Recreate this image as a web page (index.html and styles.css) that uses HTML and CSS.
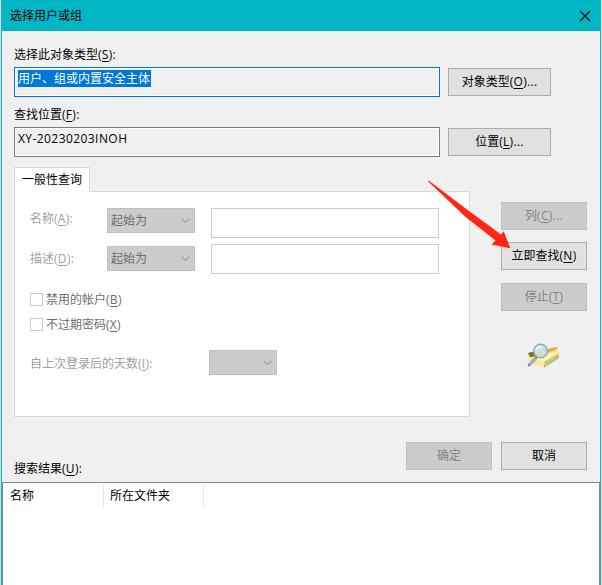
FILE: index.html
```html
<!DOCTYPE html>
<html lang="zh-CN">
<head>
<meta charset="utf-8">
<title>选择用户或组</title>
<link rel="stylesheet" href="styles.css">
</head>
<body>
<div class="dialog">
  <header class="titlebar">
    <span>选择用户或组</span>
    <svg class="close" width="12" height="12" viewBox="0 0 12 12"><path d="M1 1 11 11M11 1 1 11"/></svg>
  </header>
  <main class="content">
    <div class="label">选择此对象类型<span class="key">(<u>S</u>):</span></div>
    <div class="pick-row">
      <div class="field field-focus"><span class="selected">用户、组或内置安全主体</span></div>
      <button class="btn btn-wide">对象类型<span class="key">(<u>O</u>)...</span></button>
    </div>
    <div class="label">查找位置<span class="key">(<u>F</u>):</span></div>
    <div class="pick-row">
      <div class="field"><span class="location">XY-20230203INOH</span></div>
      <button class="btn btn-wide">位置<span class="key">(<u>L</u>)...</span></button>
    </div>
    <div class="query">
      <div class="tabs">
        <div class="tab">一般性查询</div>
        <section class="panel">
          <div class="criteria">
            <span class="dim">名称<span class="key">(<u>A</u>):</span></span>
            <div class="select">起始为<svg width="9" height="6" viewBox="0 0 9 6"><path d="M.5.5 4.5 4.5 8.5.5"/></svg></div>
            <div class="textbox"></div>
          </div>
          <div class="criteria">
            <span class="dim">描述<span class="key">(<u>D</u>):</span></span>
            <div class="select">起始为<svg width="9" height="6" viewBox="0 0 9 6"><path d="M.5.5 4.5 4.5 8.5.5"/></svg></div>
            <div class="textbox"></div>
          </div>
          <div class="checks">
            <div class="check"><i class="box"></i>禁用的帐户<span class="key">(<u>B</u>)</span></div>
            <div class="check"><i class="box"></i>不过期密码<span class="key">(<u>X</u>)</span></div>
          </div>
          <div class="days">
            <span class="dim">自上次登录后的天数<span class="key">(<u>I</u>):</span></span>
            <div class="select"><svg width="9" height="6" viewBox="0 0 9 6"><path d="M.5.5 4.5 4.5 8.5.5"/></svg></div>
          </div>
        </section>
      </div>
      <aside class="actions">
        <button class="btn" disabled>列<span class="key">(<u>C</u>)...</span></button>
        <button class="btn">立即查找<span class="key">(<u>N</u>)</span></button>
        <button class="btn btn-stop" disabled>停止<span class="key">(<u>T</u>)</span></button>
        <svg class="search-icon" width="34" height="28" viewBox="0 0 34 28">
          <path d="M1 10 20 5 32 10 32 14 17 24 7 22 1 14Z" fill="#efe58f"/>
          <path d="M1 10 8 8 13 13 3 14Z" fill="#7a7240"/>
          <path d="M16 7 30 4 30 6 18 13Z" fill="#dcae40"/>
          <path d="M20 10 29 6 32 7 24 13Z" fill="#f3dc80"/>
          <path d="M7 17 26 9 32 10 17 18.500Z" fill="#fbf5bd"/>
          <path d="M17 18.500 32 10 32 14 17 24Z" fill="#ddd07a"/>
          <path d="M7 17 17 18.500 17 24 7 22Z" fill="#f4eca4"/>
          <path d="M17 24 32 14.500M20 18.500v2M23.500 16.500v2M27 14.500v2M30 12.500v2" stroke="#9c935a" stroke-width=".9" fill="none"/>
          <path d="M9 15 2 22" stroke="#7b8290" stroke-width="2.600" stroke-linecap="round"/>
          <path d="M8.500 15.500 2.500 21.500" stroke="#bfc8d5" stroke-width="1.100"/>
          <circle cx="13.500" cy="8" r="6.800" fill="#c4e0ee" fill-opacity=".94" stroke="#8fabc4" stroke-width="1.400"/>
          <path d="M8 10Q13 6 19 9Q18 13.500 13 13.500Q9 13.500 8 10Z" fill="#d6dfb8"/>
          <path d="M9 7Q11 3 15 4" stroke="#fff" stroke-width="1.500" fill="none"/>
        </svg>
      </aside>
    </div>
    <div class="footer">
      <button class="btn" disabled>确定</button>
      <button class="btn">取消</button>
    </div>
    <div class="label label-results">搜索结果<span class="key">(<u>U</u>):</span></div>
  </main>
  <section class="results">
    <div class="columns"><span>名称</span><span>所在文件夹</span></div>
  </section>
  <svg class="arrow" width="84" height="70" viewBox="0 0 84 70"><path d="M0 1.200Q0 .3 1 .8L41 31 73 54.500 75.700 51.300 82.300 68.300 63.500 64.500 67.500 60.500 37 36.500Z"/></svg>
</div>
</body>
</html>
```
FILE: styles.css
```css
* { box-sizing: border-box; }

body {
  margin: 0;
  height: 585px;
  overflow: hidden;
  background: #d5d9da;
  color: #000;
  font: 12px/16px "Open Sans", "Noto Sans CJK SC", sans-serif;
}

.dialog {
  position: relative;
  display: flex;
  flex-direction: column;
  width: 600px;
  height: 585px;
  margin-left: 1px;
  border: solid #19b6c2;
  border-width: 0 1px;
  background: #f0f0f0;
}

.titlebar {
  display: flex;
  align-items: center;
  justify-content: space-between;
  height: 31px;
  padding: 0 9px 0 8px;
  border-top: 1px solid #10adb9;
  background: #00b7c6;
}

.close { fill: none; stroke: #000; stroke-width: 1.1; }

.content { padding: 16px 12px 0; }

.label { height: 20px; }

.key { letter-spacing: 0.3px; }

u { text-underline-offset: 2px; text-decoration-thickness: 1px; }

.pick-row {
  display: flex;
  align-items: center;
  gap: 8px;
  height: 30px;
  margin-bottom: 10px;
}

.field {
  width: 426px;
  height: 30px;
  padding: 3px 3px 0;
  border: 1px solid #7a7a7a;
  box-shadow: inset 0 0 0 1px #fff;
}

.field-focus { padding-top: 2px; border-color: #0078d7; }

.selected {
  display: inline-block;
  width: 133px;
  height: 17px;
  background: #0078d7;
  color: #fff;
  line-height: 18px;
}

.location { letter-spacing: 0.43px; }

.btn {
  width: 86px;
  height: 28px;
  padding: 0;
  border: 1px solid #adadad;
  background: #e1e1e1;
  color: #000;
  font: inherit;
  white-space: nowrap;
}

.btn-wide { width: 103px; }

.btn:disabled {
  border-color: #bfbfbf;
  background: #ccc;
  color: #838383;
}

.query { display: flex; gap: 31px; }

.tabs { width: 456px; }

.tab {
  position: relative;
  width: 76px;
  height: 25px;
  margin-bottom: -1px;
  padding: 4px 7px;
  border: 1px solid #d9d9d9;
  border-bottom: 0;
  background: #fff;
}

.panel {
  height: 226px;
  padding: 16px 15px 0;
  border: 1px solid #d9d9d9;
  background: #fff;
}

.criteria {
  display: grid;
  grid-template-columns: 77px 88px 244px;
  height: 30px;
  margin-bottom: 6px;
}

.criteria .textbox { margin-left: 16px; }

.criteria + .criteria .select { margin-top: 2px; }
.criteria + .criteria .dim { padding-top: 7px; }

.dim { padding-top: 3px; color: #a0a0a0; }

.select {
  display: flex;
  align-items: center;
  justify-content: space-between;
  height: 25px;
  padding: 0 4px 0 3px;
  border: 1px solid #bfbfbf;
  background: #ccc;
  color: #6d6d6d;
}

.select svg { fill: none; stroke: #a2a2a2; stroke-width: 1.1; }

.textbox { height: 30px; border: 1px solid #ccc; }

.checks { display: grid; row-gap: 9px; margin-top: 18px; }

.check {
  display: flex;
  height: 16px;
  color: #6d6d6d;
}

.box {
  width: 13px;
  height: 13px;
  margin: 1px 3px 0 0;
  border: 1px solid #ccc;
}

.days { display: flex; margin-top: 17px; }
.days .dim { width: 179px; padding-top: 6px; }
.days .select { width: 68px; justify-content: flex-end; }

.actions {
  display: flex;
  flex-direction: column;
  gap: 12px;
  width: 86px;
  padding-top: 35px;
}

.btn-stop { margin-top: 1px; }

.search-icon { margin: 20px 0 0 26px; }

.footer {
  display: flex;
  justify-content: flex-end;
  gap: 9px;
  margin-top: 25px;
  padding-right: 1px;
}

.label-results { height: 21px; margin-top: -9px; }

.results {
  flex: 1;
  border: solid #828790;
  border-width: 1px 1px 0;
  background: #fff;
}

.columns { display: flex; padding-top: 1px; }

.columns span {
  width: 100px;
  height: 24px;
  padding: 4px 6px;
  border-right: 1px solid #e5e5e5;
}

.columns span:first-child { width: 101px; padding-left: 7px; }

.arrow {
  position: absolute;
  left: 426px;
  top: 180px;
  fill: #ff2517;
}
```
